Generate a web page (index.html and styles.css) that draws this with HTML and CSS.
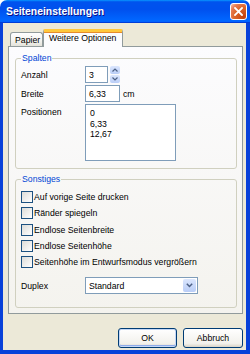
FILE: index.html
```html
<!DOCTYPE html>
<html lang="de">
<head>
  <meta charset="UTF-8" />
  <title>Seiteneinstellungen</title>
  <link rel="stylesheet" href="styles.css">
</head>
<body>

  <div class="window">
    <!-- Title bar -->
    <div class="titlebar">
      <span class="title">Seiteneinstellungen</span>
      <span class="close">
        <svg width="9" height="9" viewBox="0 0 9 9"><path d="M1 1 L8 8 M8 1 L1 8" stroke="#fff" stroke-width="1.8" stroke-linecap="square"/></svg>
      </span>
    </div>

    <div class="client">
      <!-- Tabs -->
      <div class="tabs">
        <div class="tab">Papier</div>
        <div class="tab active">Weitere Optionen</div>
      </div>

      <div class="panel">
        <fieldset class="group spalten">
          <legend>Spalten</legend>
          <div class="grid">
            <span class="lbl">Anzahl</span>
            <div class="field">
              <span class="input num">3</span>
              <span class="spin">
                <span class="spin-btn"><svg width="6" height="4" viewBox="0 0 6 4"><path d="M0.5 3.5 L3 1 L5.5 3.5" fill="none" stroke="#4d6185" stroke-width="1.2"/></svg></span>
                <span class="spin-btn"><svg width="6" height="4" viewBox="0 0 6 4"><path d="M0.5 0.5 L3 3 L5.5 0.5" fill="none" stroke="#4d6185" stroke-width="1.2"/></svg></span>
              </span>
            </div>

            <span class="lbl">Breite</span>
            <div class="field">
              <span class="input width">6,33</span>
              <span class="unit">cm</span>
            </div>

            <span class="lbl top">Positionen</span>
            <div class="field">
              <div class="textarea">0<br>6,33<br>12,67</div>
            </div>
          </div>
        </fieldset>

        <fieldset class="group sonstiges">
          <legend>Sonstiges</legend>
          <div class="check"><span class="box"></span>Auf vorige Seite drucken</div>
          <div class="check"><span class="box"></span>Ränder spiegeln</div>
          <div class="check"><span class="box"></span>Endlose Seitenbreite</div>
          <div class="check"><span class="box"></span>Endlose Seitenhöhe</div>
          <div class="check"><span class="box"></span>Seitenhöhe im Entwurfsmodus vergrößern</div>

          <div class="duplex">
            <span class="lbl">Duplex</span>
            <div class="select">
              <span>Standard</span>
              <span class="drop"><svg width="7" height="5" viewBox="0 0 7 5"><path d="M0.8 0.8 L3.5 3.5 L6.2 0.8" fill="none" stroke="#4d6185" stroke-width="1.5"/></svg></span>
            </div>
          </div>
        </fieldset>
      </div>

      <!-- Buttons -->
      <div class="buttons">
        <button class="btn default">OK</button>
        <button class="btn">Abbruch</button>
      </div>
    </div>
  </div>

</body>
</html>
```
FILE: styles.css
```css
body {
  margin: 0;
  background: #fff;
  font-family: "Liberation Sans", Arial, sans-serif;
  font-size: 8.7px;
  color: #000;
}

.window {
  width: 250px;
  height: 354px;
  display: flex;
  flex-direction: column;
  border-radius: 7px 7px 0 0;
  overflow: hidden;
}

.titlebar {
  height: 23px;
  flex: none;
  box-sizing: border-box;
  display: flex;
  align-items: center;
  justify-content: space-between;
  padding: 0 3px 0 6px;
  background: linear-gradient(180deg, #0997ff, #0053ee 8%, #0050ee 40%, #0066ff 88%, #0066ff 93%, #005bff 95%, #003dd7 96%, #003dd7);
}

.title {
  color: #fff;
  font-weight: bold;
  font-size: 10.4px;
  text-shadow: 1px 1px #0f1089;
}

.close {
  width: 17px;
  height: 17px;
  box-sizing: border-box;
  border: 1px solid #fff;
  border-radius: 3px;
  background: radial-gradient(circle at 85% 85%, #c4420f 0%, #dc6527 50%, #e67a50 75%, #f7c2aa 100%);
  display: flex;
  align-items: center;
  justify-content: center;
}

.client {
  flex: 1;
  background: #ece9d8;
  border: solid #0841d9;
  border-width: 0 4px 4px 3px;
  padding: 6px 3px 0 5px;
  display: flex;
  flex-direction: column;
}

/* Tabs */
.tabs {
  display: flex;
  align-items: flex-end;
  height: 18px;
  margin-left: 2px;
  margin-bottom: -1px;
  position: relative;
  z-index: 1;
}

.tab {
  box-sizing: border-box;
  height: 14px;
  width: 33px;
  margin-bottom: 1px;
  border: 1px solid #919b9c;
  border-bottom: none;
  border-radius: 3px 3px 0 0;
  background: linear-gradient(#fff, #f3f3ef 60%, #e3e2da);
  padding: 2px 0 0 4px;
}

.tab.active {
  height: 18px;
  width: 80px;
  margin-bottom: 0;
  background: #fcfcfe;
  border-top: 3px solid #ffc83c;
  box-shadow: inset 0 1px 0 #e68b2c;
  border-radius: 2px 2px 0 0;
  padding: 1px 0 0 5px;
}

.panel {
  box-sizing: border-box;
  width: 235px;
  height: 268px;
  border: 1px solid #919b9c;
  background: linear-gradient(#fcfcfe, #f4f3ee);
  padding: 5px 5px 0 6px;
}

/* Group boxes */
.group {
  margin: 0;
  min-width: 0;
  border: 1px solid #d0d0bf;
  border-radius: 3px;
  padding: 2px 5px 7px;
}

.group legend {
  color: #0046d5;
  padding: 0 1px;
  line-height: 12px;
}

.sonstiges {
  margin-top: 4px;
  padding-top: 4px;
  padding-bottom: 13px;
}

.grid {
  display: grid;
  grid-template-columns: 64px auto;
  row-gap: 2px;
  align-items: center;
}

.lbl.top {
  align-self: start;
  padding-top: 3px;
}

.field {
  display: flex;
  align-items: center;
}

.input {
  box-sizing: border-box;
  height: 17px;
  border: 1px solid #7f9db9;
  background: #fff;
  padding: 3px 0 0 3px;
}

.input.num {
  width: 23px;
}

.input.width {
  width: 35px;
}

.unit {
  margin-left: 3px;
}

.spin {
  display: flex;
  flex-direction: column;
  gap: 1px;
  margin-left: 2px;
  height: 17px;
}

.spin-btn {
  width: 10px;
  height: 8px;
  border-radius: 2px;
  background: linear-gradient(#dbe6fd, #b9cdf7);
  display: flex;
  align-items: center;
  justify-content: center;
}

.textarea {
  box-sizing: border-box;
  width: 91px;
  height: 57px;
  border: 1px solid #7f9db9;
  background: #fff;
  padding: 3px 0 0 4px;
  line-height: 10.5px;
}

/* Checkboxes */
.check {
  height: 16.3px;
  display: flex;
  align-items: center;
}

.box {
  box-sizing: border-box;
  width: 12px;
  height: 12px;
  border: 1px solid #1c5180;
  background: linear-gradient(135deg, #dcdcd7, #fff);
  margin-right: 1px;
}

.duplex {
  display: grid;
  grid-template-columns: 64px auto;
  align-items: center;
  margin-top: 7px;
}

.select {
  box-sizing: border-box;
  width: 113px;
  height: 17px;
  border: 1px solid #7f9db9;
  background: #fff;
  display: flex;
  align-items: center;
  justify-content: space-between;
  padding: 1px 1px 1px 3px;
}

.drop {
  width: 13px;
  height: 100%;
  border-radius: 2px;
  background: linear-gradient(#dbe6fd, #b9cdf7);
  display: flex;
  align-items: center;
  justify-content: center;
}

/* Buttons */
.buttons {
  display: flex;
  justify-content: flex-end;
  gap: 6px;
  margin-top: 14px;
}

.btn {
  box-sizing: border-box;
  width: 60px;
  height: 20px;
  border: 1px solid #003c74;
  border-radius: 3px;
  background: linear-gradient(#fff, #f2f1ec 80%, #d8d3c7);
  font-family: inherit;
  font-size: 8.7px;
  color: #000;
  padding: 0;
}

.btn.default {
  width: 59px;
  box-shadow: inset 0 0 0 1px #c4d7f6, inset 0 -1px 0 1px #8eabea;
}
```
